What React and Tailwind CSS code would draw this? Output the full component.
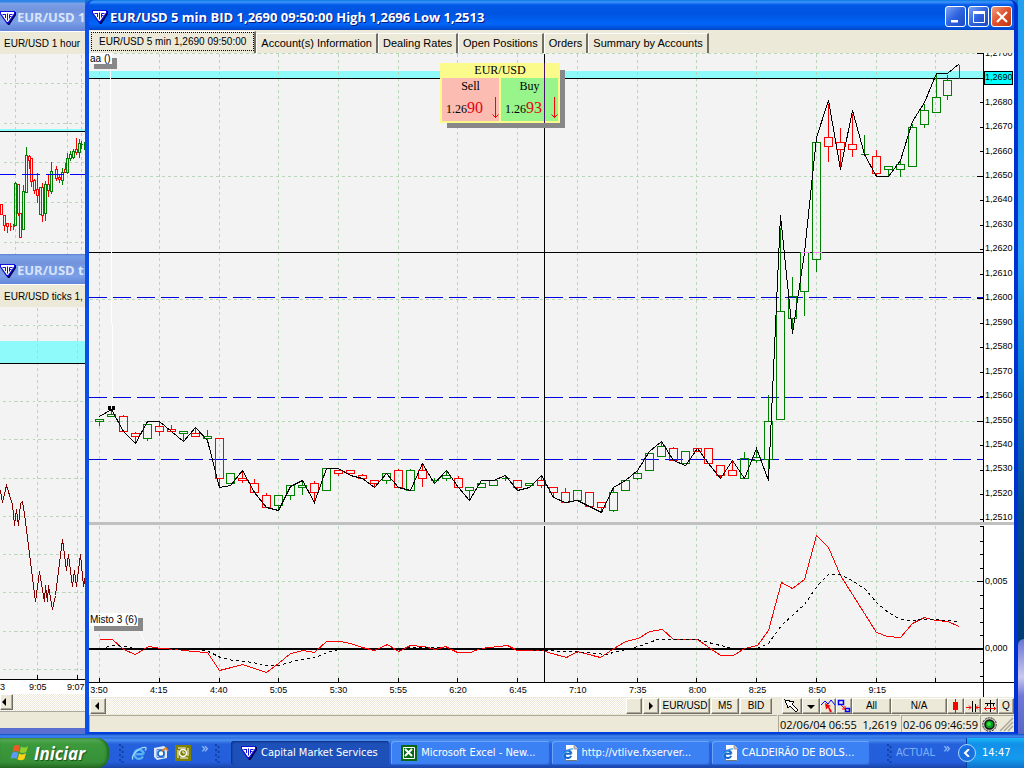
import React from "react";

const GREEN = "#008000";
const RED = "#ff0000";
const GRID = "#b9d6b9";

const xAt = (i) => Math.floor(99.5 + 11.95 * i);

// [color, high, bodyTop, bodyBottom, low]
const CANDLES = [
  ["g", 419, 419, 421, 425], ["g", 410, 414, 416, 416], ["r", 414, 416, 431, 431], ["r", 431, 433, 436, 441],
  ["g", 424, 424, 438, 440], ["r", 421, 426, 431, 435], ["r", 424, 429, 431, 431], ["g", 431, 431, 433, 441],
  ["r", 427, 433, 436, 436], ["g", 429, 436, 438, 440], ["r", 438, 438, 478, 487], ["g", 473, 473, 483, 483],
  ["r", 470, 478, 480, 482], ["r", 478, 483, 492, 492], ["r", 492, 495, 507, 507], ["g", 495, 495, 505, 510],
  ["g", 485, 485, 495, 499], ["g", 480, 485, 487, 494], ["r", 480, 483, 492, 502], ["g", 468, 468, 490, 490],
  ["r", 470, 470, 473, 475], ["r", 470, 470, 473, 473], ["r", 473, 475, 478, 478], ["r", 480, 480, 483, 487],
  ["g", 473, 473, 480, 483], ["r", 468, 470, 487, 487], ["g", 468, 470, 490, 490], ["r", 464, 470, 478, 486],
  ["g", 477, 480, 480, 483], ["g", 470, 475, 478, 480], ["r", 475, 478, 487, 487], ["g", 487, 487, 490, 499],
  ["g", 483, 483, 487, 487], ["g", 480, 480, 485, 485], ["g", 475, 478, 478, 480], ["r", 480, 480, 487, 490],
  ["g", 483, 483, 485, 485], ["r", 475, 480, 485, 487], ["r", 487, 487, 492, 497], ["r", 487, 492, 502, 502],
  ["g", 490, 490, 500, 500], ["r", 492, 492, 506, 506], ["r", 502, 502, 507, 512], ["g", 487, 492, 510, 511],
  ["g", 480, 480, 490, 490], ["g", 470, 473, 478, 479], ["g", 453, 453, 470, 470], ["g", 441, 446, 456, 456],
  ["r", 446, 448, 460, 460], ["g", 451, 451, 463, 463], ["r", 448, 448, 451, 451], ["r", 448, 448, 463, 463],
  ["r", 465, 465, 475, 478], ["r", 460, 470, 475, 475], ["g", 451, 458, 478, 478], ["g", 448, 457, 460, 462],
  ["g", 394, 421, 459, 470], ["g", 227, 311, 419, 419], ["g", 276, 296, 318, 328], ["g", 252, 252, 291, 315],
  ["g", 142, 142, 259, 271], ["r", 103, 137, 146, 161], ["r", 127, 142, 149, 167], ["r", 113, 144, 149, 156],
  ["g", 134, 154, 154, 154], ["r", 149, 156, 173, 176], ["g", 166, 166, 169, 176], ["g", 160, 164, 169, 176],
  ["g", 123, 127, 166, 166], ["g", 103, 110, 124, 127], ["g", 74, 97, 112, 112], ["g", 74, 80, 95, 99],
];

const TREND = [
  416, 409, 431, 443, 421, 421, 431, 441, 427, 440, 487, 485, 470, 492, 507, 510, 486, 480, 502, 468, 468, 475, 478,
  487, 473, 487, 490, 463, 483, 470, 487, 500, 480, 480, 475, 490, 487, 475, 497, 502, 500, 506, 512, 487, 480, 470,
  451, 441, 460, 465, 448, 463, 478, 460, 478, 448, 480, 215, 333, 252, 137, 100, 169, 110, 154, 176, 176, 160, 121,
  102, 73, 73, 63,
];

const RED_LINE =
  "99,639 112,639 123,649 135,654 148,646 160,648 177,649 192,651 207,652 219,670 231,667 242,664 254,668 266,672 278,663 290,653 303,650 314,652 326,641 340,641 350,643 362,647 374,650 387,644 398,651 410,645 423,646 435,649 445,646 457,652 470,652 480,648 507,645 517,650 543,650 548,652 566,657 577,651 592,655 600,657 612,649 625,641 638,638 649,631 662,629 673,639 697,639 720,655 733,655 744,648 757,645 768,630 781,582 792,588 804,579 816,535 828,547 840,575 876,632 887,636 900,637 912,623 924,617 935,620 947,621 959,626";

const SIGNAL_LINE =
  "100,648 113,645 125,646 137,649 197,649 208,651 220,657 233,660 245,661 257,663 267,665 278,665 292,661 315,657 327,652 338,649 398,649 410,647 435,647 457,649 480,648 517,649 547,650 565,651 587,652 605,654 625,649 638,646 657,639 697,639 708,642 720,645 733,648 757,648 768,643 781,625 804,604 817,585 828,574 840,574 853,581 865,589 877,603 888,612 900,619 912,620 923,619 935,619 957,621";

const GRID_X = [99, 159, 219, 278, 338, 398, 457, 517, 577, 637, 696, 756, 816, 876, 935];
const TIMES = ["3:50", "4:15", "4:40", "5:05", "5:30", "5:55", "6:20", "6:45", "7:10", "7:35", "8:00", "8:25", "8:50", "9:15"];
const PRICES = Array.from({ length: 20 }, (_, i) => "1,2" + (700 - i * 10));

// [color, x, high, bodyTop, bodyBottom, low]
const HOUR_CANDLES = [
  ["r", 1, 204, 204, 214, 214], ["r", 4, 215, 215, 225, 230], ["r", 7, 222, 223, 226, 232], ["r", 10, 222, 226, 226, 230],
  ["r", 13, 223, 226, 226, 229], ["g", 15, 181, 183, 225, 225], ["r", 18, 183, 184, 213, 215], ["r", 20, 212, 213, 237, 237],
  ["g", 23, 184, 191, 229, 229], ["g", 26, 146, 155, 192, 192], ["r", 29, 154, 156, 160, 168], ["r", 31, 157, 158, 181, 186],
  ["r", 34, 178, 180, 190, 193], ["r", 37, 172, 189, 195, 202], ["g", 40, 186, 187, 214, 214], ["r", 42, 182, 187, 215, 221],
  ["g", 45, 180, 184, 213, 220], ["r", 48, 173, 184, 190, 196], ["g", 51, 161, 171, 191, 193], ["r", 56, 165, 169, 178, 180],
  ["r", 59, 174, 177, 179, 182], ["g", 62, 167, 172, 180, 184], ["r", 65, 162, 169, 172, 172], ["g", 67, 152, 158, 172, 173],
  ["g", 70, 150, 154, 158, 160], ["g", 73, 148, 151, 157, 158], ["r", 76, 137, 149, 152, 154], ["g", 79, 138, 143, 152, 157],
  ["g", 81, 140, 144, 144, 148], ["g", 84, 141, 144, 144, 149],
];

const TICK_LINE =
  "0,490 2,502 6,485 12,504 14,525 16,509 18,525 20,503 22,501 24,513 35,601 39,571 44,601 45,585 47,601 48,585 50,598 52,609 55,595 62,539 66,570 68,554 72,586 74,570 76,586 80,554 83,586 85,575";

function Candle({ c, x, high, top, bottom, low, half }) {
  const stroke = c === "g" ? GREEN : RED;
  return (
    <g stroke={stroke} fill="none">
      {high < top && <line x1={x} x2={x} y1={high} y2={top} />}
      {low > bottom && <line x1={x} x2={x} y1={bottom} y2={low} />}
      {top === bottom ? (
        <line x1={x - half} x2={x + half} y1={top} y2={top} />
      ) : (
        <rect x={x - half} y={top} width={half * 2} height={bottom - top} />
      )}
    </g>
  );
}

function VtLogo() {
  return (
    <svg className="h-4 w-4 shrink-0" viewBox="0 0 16 16" aria-hidden="true">
      <path d="M1 2h15v3L9.500 15H8L1 5z" fill="#00004a" />
      <path d="M0 1h15v3L8.500 13.500h-2L0 4z" fill="#1010e0" />
      <path d="M1 2h13v1.500L8 12H7L1 3.500z" fill="#fff" />
      <path d="M2.500 4.500h3v3M5.500 4v4M7.500 3.500v7M9.500 8.500V4.500h3M9.500 6.500h2" fill="none" stroke="#1010e0" />
    </svg>
  );
}

function IeGlyph() {
  return (
    <>
      <path d="M12.500 9.300H5.200M12 11.500A4.600 4.600 0 1 1 12.600 9.300" fill="none" stroke="#56b4f4" strokeWidth="2.400" />
      <path d="M2 14.500C-.5 11 8 2 14.500 2.500c1 .5.500 2-.5 3" fill="none" stroke="#9fdcff" strokeWidth="1.300" />
    </>
  );
}

function IePage() {
  return (
    <svg className="h-4 w-4 shrink-0" viewBox="0 0 16 16" aria-hidden="true">
      <path d="M4 0h8l4 4v12H4z" fill="#fff" />
      <path d="M12 0v4h4" fill="#c8c8c0" stroke="#777" strokeWidth=".6" />
      <path d="M4 15.500h11.500V4" fill="none" stroke="#777" />
      <path d="M9.500 8.700H3M9.200 10.900A3.700 3.700 0 1 1 9.500 8.700" fill="none" stroke="#1467c8" strokeWidth="2" />
      <path d="M1 13C-1 10 6 3.500 11 4" fill="none" stroke="#3c9af0" strokeWidth="1.200" />
    </svg>
  );
}

function Flag() {
  return (
    <svg className="h-5 w-5 shrink-0" viewBox="0 0 20 20" aria-hidden="true">
      <path d="M4 3c2-1.500 4-1.500 6 0L8.500 9c-2-1.500-4-1.500-6 0z" fill="#f0582a" />
      <path d="M11 3.500c2 1.300 4 1.300 7-.3L16.300 9c-2.300 1.500-4.500 1.300-6.800.3z" fill="#8fd02f" />
      <path d="M2.200 10c2-1.400 4-1.400 6 0l-1.600 6c-2-1.500-4-1.500-6 0z" fill="#5a9bf5" />
      <path d="M9.200 10.500c2 1.300 4.300 1.300 6.800-.2l-1.700 5.900c-2.300 1.500-4.500 1.300-6.800.3z" fill="#fcd116" />
    </svg>
  );
}

const raised = "border border-t-white border-l-white border-r-[#716f64] border-b-[#716f64] bg-[#ece9d8] shadow-[inset_-1px_-1px_0_#aca899]";

function ToolButton({ width, label, children }) {
  return (
    <button
      aria-label={label}
      className={`flex h-4 shrink-0 items-center justify-center overflow-hidden whitespace-nowrap font-['Liberation_Sans',sans-serif] text-[10px] leading-none text-black ${raised} ${width}`}
    >
      {children}
    </button>
  );
}

function Arrow({ d }) {
  return (
    <svg className="h-2 w-2" viewBox="0 0 8 8" aria-hidden="true">
      <path d={d} fill="#000" />
    </svg>
  );
}

function LeftWindows() {
  const dither = "bg-[repeating-conic-gradient(#ece9d8_0_25%,#ffffff_0_50%)] bg-[length:2px_2px]";
  const title =
    "flex shrink-0 items-center overflow-hidden whitespace-nowrap font-['Open_Sans','Noto_Sans',sans-serif] text-[13px] font-bold text-[#d8e4f8]";
  const tab =
    "flex h-[23px] shrink-0 items-center overflow-hidden whitespace-nowrap border-t border-white bg-[#ece9d8] pl-1 font-['Liberation_Sans',sans-serif] text-[10px] text-black";
  return (
    <div className="flex w-[85px] shrink-0 flex-col overflow-hidden">
      <section aria-label="EUR/USD 1 hour" className="flex min-h-0 flex-[254_1_0%] flex-col">
        <header className={`${title} h-[31px] bg-[linear-gradient(#2f86e8_0,#2f86e8_2px,#7ba2e7_3px,#7393dd_10px,#7b9fe8_22px,#6486d8_30px)] pt-1`}>
          <VtLogo />
          <span className="pl-px">EUR/USD 1</span>
        </header>
        <div className={tab}>EUR/USD 1 hour</div>
        <svg className="min-h-0 w-full flex-1 bg-[#f3f3f3]" viewBox="-0.5 53.5 85 200" preserveAspectRatio="none" shapeRendering="crispEdges">
          <g stroke={GRID} strokeDasharray="3 3">
            {[15, 67, 81].map((x) => <line key={x} x1={x} x2={x} y1="54" y2="254" />)}
            {[83, 123, 162, 202, 242].map((y) => <line key={y} x1="3" x2="85" y1={y} y2={y} />)}
          </g>
          <rect x="-1" y="128" width="87" height="3" fill="#8ffafa" />
          <line x1="-1" x2="85" y1="131" y2="131" stroke="#000" />
          {HOUR_CANDLES.map(([c, x, high, top, bottom, low]) => (
            <Candle key={x} c={c} x={x} high={high} top={top} bottom={bottom} low={low} half={1} />
          ))}
          <line x1="-3" x2="85" y1="174" y2="174" stroke="#0000ff" strokeDasharray="18 6" />
        </svg>
      </section>
      <section aria-label="EUR/USD ticks" className="flex min-h-0 flex-[474_1_0%] flex-col border-b-[6px] border-[#5b6fd0]">
        <header className={`${title} h-[30px] bg-[linear-gradient(#5f7fd0_0,#7ba2e7_2px,#7393dd_9px,#7b9fe8_22px,#6486d8_30px)] pt-1`}>
          <VtLogo />
          <span className="pl-px">EUR/USD ti</span>
        </header>
        <div className={tab}>EUR/USD ticks 1,</div>
        <svg className="min-h-0 w-full flex-1 bg-[#f3f3f3]" viewBox="-0.5 306.5 85 372" preserveAspectRatio="none" shapeRendering="crispEdges">
          <rect x="-1" y="340" width="87" height="23" fill="#8ffafa" />
          <g stroke={GRID} strokeDasharray="3 3">
            {[37, 77].map((x) => <line key={x} x1={x} x2={x} y1="307" y2="679" />)}
            {[325, 401, 439, 478, 516, 554, 592, 631, 669].map((y) => <line key={y} x1="2" x2="85" y1={y} y2={y} />)}
          </g>
          <line x1="-1" x2="85" y1="363" y2="363" stroke="#000" />
          <polyline points={TICK_LINE} fill="none" stroke="#800000" />
          <path d="M37 674v5M77 674v5" stroke="#000" />
        </svg>
        <div className="flex h-[15px] shrink-0 items-center overflow-hidden whitespace-nowrap border-t border-black bg-white font-['Liberation_Sans',sans-serif] text-[9px] leading-none text-black">
          <span className="w-[29px]">3</span>
          <span className="w-[38px]">9:05</span>
          <span>9:07</span>
        </div>
        <div className={`flex h-[17px] shrink-0 ${dither}`}>
          <button aria-label="Scroll left" className={`flex h-4 w-[13px] items-center ${raised}`}>
            <Arrow d="M5 0v8L1 4z" />
          </button>
        </div>
        <div className="h-[17px] shrink-0 border-t border-[#aca899] bg-[#ece9d8]" />
      </section>
    </div>
  );
}

function PricePlot() {
  return (
    <svg className="h-full min-w-0 flex-1 bg-[#f3f3f3]" viewBox="88.5 52.5 895 469" preserveAspectRatio="none" shapeRendering="crispEdges" role="img" aria-label="EUR/USD 5 minute candles">
      <rect x="88" y="70" width="895" height="8" fill="#8ffafa" />
      <g stroke={GRID} strokeDasharray="3 3">
        {GRID_X.map((x) => <line key={x} x1={x} x2={x} y1="53" y2="523" />)}
        {[53, 176, 299, 421].map((y) => <line key={y} x1="89" x2="983" y1={y} y2={y} />)}
      </g>
      <path d="M88 78H983M88 252H983" stroke="#000" />
      <g stroke="#0000e0" strokeDasharray="18 6">
        {[297, 397, 459].map((y) => <line key={y} x1="88.500" x2="983" y1={y} y2={y} />)}
      </g>
      <path d="M110 64v86M111 150v173M112 323v84" fill="none" stroke="#fff" />
      {CANDLES.map(([c, high, top, bottom, low], i) => (
        <Candle key={i} c={c} x={xAt(i)} high={high} top={top} bottom={bottom} low={low} half={4} />
      ))}
      <line x1="959" x2="959" y1="64" y2="78" stroke={GREEN} />
      <path d="M800 252h9M812 252h9" stroke="#ff80ff" />
      <polyline points={TREND.map((y, i) => `${xAt(i)},${y}`).join(" ")} fill="none" stroke="#000" />
      <path d="M108 406h2v3h-2zM112 406h2v3h-2z" fill="#000" stroke="#000" />
      <line x1="544" x2="544" y1="53" y2="523" stroke="#000" />
      <line x1="983" x2="983" y1="53" y2="523" stroke="#000" />
      <g stroke="#000">
        {PRICES.map((p, i) => {
          const y = Math.round(53 + i * 24.52);
          if (i === 1) return null;
          return <line key={p} x1={i % 5 === 0 ? 976 : 979} x2="983" y1={y} y2={y} />;
        })}
      </g>
    </svg>
  );
}

function IndicatorPlot() {
  return (
    <svg className="h-full min-w-0 flex-1 bg-[#f3f3f3]" viewBox="88.5 524.5 895 157" preserveAspectRatio="none" shapeRendering="crispEdges" role="img" aria-label="Misto 3 indicator">
      <g stroke={GRID} strokeDasharray="3 3">
        {GRID_X.map((x) => <line key={x} x1={x} x2={x} y1="525" y2="682" />)}
        <line x1="89" x2="983" y1="581" y2="581" />
      </g>
      <line x1="136" x2="147" y1="625" y2="646" stroke="#fff" />
      <rect x="88" y="647.500" width="895" height="2" fill="#000" />
      <polyline points={RED_LINE} fill="none" stroke="#ff0000" />
      <polyline points={SIGNAL_LINE} fill="none" stroke="#000" strokeDasharray="3 3" />
      <path d="M544 525v157M983 525v157" stroke="#000" />
      <g stroke="#000">
        {GRID_X.map((x) => <line key={x} x1={x} x2={x} y1="677" y2="682" />)}
        {[526, 541, 554, 568, 595, 608, 622, 635, 662, 676].map((y) => <line key={y} x1="979" x2="983" y1={y} y2={y} />)}
        <line x1="976" x2="983" y1="581" y2="581" />
      </g>
    </svg>
  );
}

function Quote({ side, big, bg }) {
  return (
    <button className={`flex flex-1 flex-col items-center text-black ${bg}`}>
      <span className="text-[12px] leading-4">{side}</span>
      <span className="flex w-full flex-1 items-center justify-between pl-1">
        <span className="text-[12px] leading-none">
          1.26<span className="text-[16px] text-red-600">{big}</span>
        </span>
        <svg className="h-[22px] w-[7px]" viewBox="0 0 7 22" aria-hidden="true">
          <path d="M3.500 0v21M.5 17.500l3 3 3-3" fill="none" stroke="#ff0000" />
        </svg>
      </span>
    </button>
  );
}

function QuoteBox() {
  return (
    <div className="absolute left-[351px] top-[10px] flex h-[60px] w-[120px] flex-col bg-[#fbfb8c] px-[2px] pb-[2px] font-['Liberation_Serif',serif] shadow-[6px_6px_0_-1px_#888888]">
      <div className="h-[15px] shrink-0 text-center text-[12px] leading-[14px] text-black">EUR/USD</div>
      <div className="flex flex-1 gap-[2px]">
        <Quote side="Sell" big="90" bg="bg-[#fcbcb2]" />
        <Quote side="Buy" big="93" bg="bg-[#98f58c]" />
      </div>
      <div className="absolute left-[104px] top-0 h-full w-px bg-[#4a1070]" />
    </div>
  );
}

function TitleBar() {
  const btn = "flex h-[21px] w-[21px] items-center justify-center rounded-[3px] border border-white";
  return (
    <header className="flex h-[30px] shrink-0 items-center gap-[2px] rounded-t-md bg-[linear-gradient(#0a78e0_0,#3d95ff_2px,#0058e6_5px,#0055e0_14px,#0066fa_24px,#0046c8_30px)] pl-[3px] pr-[2px] pt-[3px]">
      <VtLogo />
      <h1 className="min-w-0 flex-1 overflow-hidden whitespace-nowrap font-['Open_Sans','Noto_Sans',sans-serif] text-[13px] font-bold leading-5 text-white [text-shadow:1px_1px_0_#0a1883]">
        EUR/USD 5 min BID 1,2690 09:50:00 High 1,2696 Low 1,2513
      </h1>
      <div className="flex gap-[2px]">
        <button aria-label="Minimize" className={`${btn} bg-[linear-gradient(135deg,#7ba4f4,#2e62e0_50%,#1c49c0)]`}>
          <svg className="h-3 w-3" viewBox="0 0 12 12"><path d="M1 9h7v2.500H1z" fill="#fff" /></svg>
        </button>
        <button aria-label="Maximize" className={`${btn} bg-[linear-gradient(135deg,#7ba4f4,#2e62e0_50%,#1c49c0)]`}>
          <svg className="h-3 w-3" viewBox="0 0 12 12"><path d="M.5.5h11v11H.5zM.5 2h11" fill="none" stroke="#fff" /><path d="M0 0h12v3H0z" fill="#fff" /></svg>
        </button>
        <button aria-label="Close" className={`${btn} bg-[linear-gradient(135deg,#f0a080,#e0502a_50%,#c03810)]`}>
          <svg className="h-3 w-3" viewBox="0 0 12 12"><path d="M1 1l10 10M11 1L1 11" stroke="#fff" strokeWidth="2.200" /></svg>
        </button>
      </div>
    </header>
  );
}

function Tabs() {
  const tab =
    "h-5 shrink-0 whitespace-nowrap border-l border-t border-l-white border-t-white border-r-2 border-r-[#716f64] px-1 leading-none";
  return (
    <nav className="flex h-[23px] shrink-0 items-end overflow-hidden bg-[#ece9d8] pl-[2px] font-['Liberation_Sans',sans-serif] text-[11px] text-black">
      <button className="h-[22px] shrink-0 whitespace-nowrap border-r-2 border-t border-r-[#716f64] border-t-white pb-[2px]">
        <span className="flex h-[19px] items-center border border-dotted border-black px-[7px] text-[10px] leading-none">EUR/USD 5 min 1,2690 09:50:00</span>
      </button>
      {["Account(s) Information", "Dealing Rates", "Open Positions", "Orders", "Summary by Accounts"].map((t) => (
        <button key={t} className={tab}>{t}</button>
      ))}
    </nav>
  );
}

function Toolbar() {
  return (
    <div className="flex h-[17px] shrink-0 items-center bg-[#ece9d8] pl-px">
      <ToolButton width="w-4" label="Scroll left"><Arrow d="M5 0v8L1 4z" /></ToolButton>
      <div className="h-4 min-w-0 flex-1 bg-[repeating-conic-gradient(#ece9d8_0_25%,#ffffff_0_50%)] bg-[length:2px_2px]" />
      <div className="flex shrink-0 gap-px">
        <ToolButton width="w-4" label="Scroll thumb" />
        <ToolButton width="w-4" label="Scroll right"><Arrow d="M2 0v8l4-4z" /></ToolButton>
        <ToolButton width="w-[50px]">EUR/USD</ToolButton>
        <ToolButton width="w-7">M5</ToolButton>
        <ToolButton width="w-8">BID</ToolButton>
      </div>
      <div className="ml-[10px] flex shrink-0">
        <ToolButton width="w-5" label="Pointer">
          <svg className="h-[14px] w-4" viewBox="0 0 16 14" shapeRendering="crispEdges">
            <path d="M1 1l9 2-2 2 6 6-2 2-6-6-2 2z" fill="#fff" stroke="#000" />
          </svg>
        </ToolButton>
        <ToolButton width="w-[18px]" label="Pointer options"><Arrow d="M0 3h8L4 7z" /></ToolButton>
        <ToolButton width="w-4" label="Line study">
          <svg className="h-[14px] w-[14px]" viewBox="0 0 14 14">
            <path d="M0 6l4-4 3 3 3-4 4 5" fill="none" stroke="#0000ff" />
            <path d="M4 4l6 3-2 .5 3 5-2 1-2-5-2 2z" fill="#ff0000" />
          </svg>
        </ToolButton>
        <ToolButton width="w-4" label="Link">
          <svg className="h-[14px] w-[14px]" viewBox="0 0 14 14">
            <path d="M1.500 1.500h5v4h-5zM8.500 9.500h4v3h-4z" fill="none" stroke="#0000ff" strokeWidth="1.500" />
            <path d="M4 6l4 4M8 7v3H5" fill="none" stroke="#ff0000" />
          </svg>
        </ToolButton>
        <ToolButton width="w-[39px]">All</ToolButton>
        <ToolButton width="w-14">N/A</ToolButton>
        <ToolButton width="w-[17px]" label="Candles">
          <svg className="h-[14px] w-2" viewBox="0 0 8 14"><path d="M1 3h5v8H1zM3 0h1v14H3z" fill="#ff0000" /></svg>
        </ToolButton>
        <ToolButton width="w-[17px]" label="Compress">
          <svg className="h-3 w-[14px]" viewBox="0 0 14 12">
            <path d="M6.500 1v11M9.500 4v8" stroke="#000" />
            <path d="M0 7.500h5M3 5.500l2 2-2 2M14 7.500h-4M12 5.500l-2 2 2 2" fill="none" stroke="#ff0000" />
          </svg>
        </ToolButton>
        <ToolButton width="w-[17px]" label="Expand">
          <svg className="h-3 w-3" viewBox="0 0 12 12">
            <path d="M1 3.500h10M6.500 0v12M3.500 3v3M9.500 3v3" stroke="#000" />
            <path d="M0 8.500h12M2.500 6.500l-2 2 2 2M9.500 6.500l2 2-2 2" fill="none" stroke="#ff0000" />
          </svg>
        </ToolButton>
        <ToolButton width="w-4">Q</ToolButton>
      </div>
    </div>
  );
}

function StatusBar() {
  const cell = "flex h-[17px] shrink-0 items-center overflow-hidden whitespace-pre border-l border-t border-[#aca899] pl-px";
  return (
    <footer className="flex h-[18px] shrink-0 items-end gap-px bg-[#ece9d8] font-['Open_Sans','Noto_Sans',sans-serif] text-[11px] leading-none text-black">
      <div className="h-[17px] min-w-0 flex-1 border-l border-t border-[#aca899]" />
      <div className={`${cell} w-[122px]`}>02/06/04 06:55  1,2619</div>
      <div className={`${cell} w-[78px]`}>02-06 09:46:59</div>
      <div className={`${cell} w-[34px] justify-between`}>
        <svg className="h-[15px] w-[15px]" viewBox="0 0 15 15" aria-hidden="true">
          <circle cx="7.500" cy="7.500" r="6.800" fill="#c8c8c0" stroke="#222" strokeDasharray="2 1" />
          <circle cx="7.500" cy="7.500" r="4.500" fill="#0a9a20" stroke="#111" strokeWidth="1.500" />
          <circle cx="7" cy="7" r="2" fill="#30e040" />
        </svg>
        <svg className="h-4 w-4" viewBox="0 0 16 16" aria-hidden="true">
          <path d="M2 15L15 2M6 15l9-9M10 15l5-5" stroke="#aca899" strokeWidth="1.500" />
        </svg>
      </div>
    </footer>
  );
}

function MainWindow() {
  return (
    <main className="flex min-w-0 flex-1 flex-col rounded-t-lg border-b-2 border-l-4 border-r-4 border-b-[#0040e0] border-l-[#0a50e8] border-r-[#0030d0] bg-[#0050e0]">
      <TitleBar />
      <Tabs />
      <div className="relative flex min-h-0 flex-[469_1_0%] overflow-hidden">
        <PricePlot />
        <div className="relative w-[30px] shrink-0 overflow-hidden bg-white">
          <ol className="absolute inset-x-0 -bottom-2 -top-3 flex flex-col font-['Liberation_Sans',sans-serif] text-[9px] leading-none text-black">
            {PRICES.map((p, i) => (
              <li key={p} className="flex min-h-0 flex-1 items-center">
                <span className={i === 1 ? "flex h-[14px] w-[29px] items-center border border-black bg-[#00ffff]" : "pl-px"}>{p}</span>
              </li>
            ))}
          </ol>
        </div>
        <div className="absolute left-0 top-0 bg-white px-px font-['Liberation_Sans',sans-serif] text-[10px] leading-[11px] text-black shadow-[5px_5px_0_#888888]">aa ()</div>
        <QuoteBox />
      </div>
      <div className="h-[3px] shrink-0 bg-[#c0c0c0]" />
      <div className="relative flex min-h-0 flex-[157_1_0%] overflow-hidden">
        <IndicatorPlot />
        <div className="flex w-[30px] shrink-0 flex-col bg-white pl-px pt-[22px] font-['Liberation_Sans',sans-serif] text-[9px] leading-none text-black">
          <span className="flex flex-[68_1_0%] items-center">0,005</span>
          <span className="flex flex-[67_1_0%] items-center">0,000</span>
        </div>
        <div className="absolute left-0 top-[88px] bg-white px-px font-['Liberation_Sans',sans-serif] text-[10px] leading-[13px] text-black shadow-[5px_5px_0_#888888]">Misto 3 (6)</div>
      </div>
      <div className="flex h-[15px] shrink-0 overflow-hidden border-t border-black bg-white">
        <div className="min-w-0 flex-1 border-r border-black">
          <ol className="-ml-5 mr-4 grid grid-cols-15 font-['Liberation_Sans',sans-serif] text-[9px] leading-[14px] text-black">
            {TIMES.map((t) => <li key={t} className="text-center">{t}</li>)}
          </ol>
        </div>
        <div className="w-[30px] shrink-0" />
      </div>
      <Toolbar />
      <StatusBar />
    </main>
  );
}

function Grip() {
  return (
    <svg className="h-5 w-[5px] shrink-0" viewBox="0 0 5 20" aria-hidden="true">
      <path d="M1 1v19M3.500 3v17" stroke="#123fa8" strokeWidth="2" strokeDasharray="2 3" />
    </svg>
  );
}

function TaskButton({ icon, label, active }) {
  return (
    <button
      className={`flex h-6 min-w-0 flex-1 items-center gap-1 rounded-[3px] pl-[10px] text-left text-white ${
        active
          ? "bg-[#1d50b8] shadow-[inset_1px_1px_2px_#0c2f80]"
          : "bg-[#3c81f3] shadow-[inset_1px_1px_0_#6aa4ff,inset_-1px_-1px_1px_#2860d0]"
      }`}
    >
      {icon}
      <span className="truncate">{label}</span>
    </button>
  );
}

function Taskbar() {
  return (
    <footer className="flex h-[34px] shrink-0 items-stretch overflow-hidden bg-[linear-gradient(#1048c0_0,#3f86f0_2px,#2f6fe0_4px,#4a90f0_6px,#2561dc_10px,#245edb_28px,#1a44a8_34px)] pt-1 font-['DejaVu_Sans_Condensed','Open_Sans',sans-serif] text-[11px]">
      <button className="flex w-[109px] shrink-0 items-center gap-1 rounded-r-xl bg-[linear-gradient(#5eae5a,#3c9a3c_20%,#379037_80%,#256b25)] pl-[10px] font-['Open_Sans','Noto_Sans',sans-serif] text-[17px] font-bold italic leading-none text-white shadow-[inset_-2px_0_3px_#1e661e] [text-shadow:1px_1px_1px_#1b4d1b]">
        <Flag />
        Iniciar
      </button>
      <div className="flex w-[118px] shrink-0 items-center gap-[6px] pl-[10px]">
        <Grip />
        <a href="#ie" aria-label="Internet Explorer" className="ml-px">
          <svg className="h-4 w-4" viewBox="0 0 16 16"><IeGlyph /></svg>
        </a>
        <a href="#mail" aria-label="Outlook Express">
          <svg className="h-4 w-4" viewBox="0 0 16 16">
            <path d="M1 3l10-2 3 3v9l-10 2-3-3z" fill="#dce9fa" />
            <path d="M4 4.500h7v8H4z" fill="#fff" stroke="#5a8ad0" />
            <circle cx="8" cy="8.500" r="3" fill="none" stroke="#1467c8" strokeWidth="1.600" />
            <path d="M9 6l4-3 2 3" fill="none" stroke="#e08020" strokeWidth="1.600" />
          </svg>
        </a>
        <a href="#clock" aria-label="Outlook">
          <svg className="h-4 w-4" viewBox="0 0 16 16">
            <path d="M0 0h16v16H0z" fill="#808000" />
            <path d="M3 3h10v10H3z" fill="none" stroke="#fff" strokeDasharray="8 2" />
            <circle cx="8" cy="8" r="3.500" fill="none" stroke="#fff" strokeWidth="1.500" />
            <path d="M8 6v2h2" fill="none" stroke="#fff" />
          </svg>
        </a>
        <span className="self-start pl-1 text-[14px] leading-5 text-[#a8c8ff]">»</span>
        <Grip />
      </div>
      <div className="flex min-w-0 flex-1 items-center gap-[2px] pl-[4px]">
        <TaskButton active icon={<VtLogo />} label="Capital Market Services" />
        <TaskButton
          icon={
            <svg className="h-4 w-4 shrink-0" viewBox="0 0 16 16">
              <path d="M0 0h16v16H0z" fill="#0a6a14" />
              <path d="M2.500 2.500h11v11h-11z" fill="#0a6a14" stroke="#fff" />
              <path d="M4 4l7 7M11 4l-7 7" stroke="#fff" strokeWidth="2" />
            </svg>
          }
          label="Microsoft Excel - New..."
        />
        <TaskButton icon={<IePage />} label="http://vtlive.fxserver..." />
        <TaskButton icon={<IePage />} label="CALDEIRÃO DE BOLS..." />
      </div>
      <div className="flex w-[96px] shrink-0 items-center gap-1 pl-[17px] text-[#7fb0f8]">
        <Grip />
        <span>ACTUAL</span>
        <span className="self-start pl-1 text-[14px] leading-5 text-[#a8c8ff]">»</span>
      </div>
      <div className="relative flex w-[58px] shrink-0 items-center border-l border-[#0a3ea0] bg-[linear-gradient(#18b8f8,#1290e8_20%,#139aee_70%,#0d70c8)] pl-[15px] text-white">
        <button aria-label="Show hidden icons" className="absolute -left-[9px] top-[6px] flex h-[18px] w-[18px] items-center justify-center rounded-full border border-[#a8dcff] bg-[#1a70e0]">
          <svg className="h-2 w-2" viewBox="0 0 8 8"><path d="M6 0L2 4l4 4" fill="none" stroke="#fff" strokeWidth="2" /></svg>
        </button>
        <time>14:47</time>
      </div>
    </footer>
  );
}

export default function App() {
  return (
    <div className="flex h-screen min-h-[500px] flex-col overflow-hidden bg-[#1a70d0]">
      <div className="flex min-h-0 flex-1">
        <LeftWindows />
        <MainWindow />
        <div className="flex w-[6px] shrink-0 flex-col justify-end bg-[linear-gradient(#22a0f0_0,#2aa8f4_35%,#0a80d8_50%,#0560b8_60%,#004a90_70%,#003c78_85%)]">
          <div className="h-[13%] rounded-tl-md bg-[linear-gradient(#6a74d8,#c8c8f0_40%,#7078d8_60%,#5868c8)]" />
        </div>
      </div>
      <Taskbar />
    </div>
  );
}
